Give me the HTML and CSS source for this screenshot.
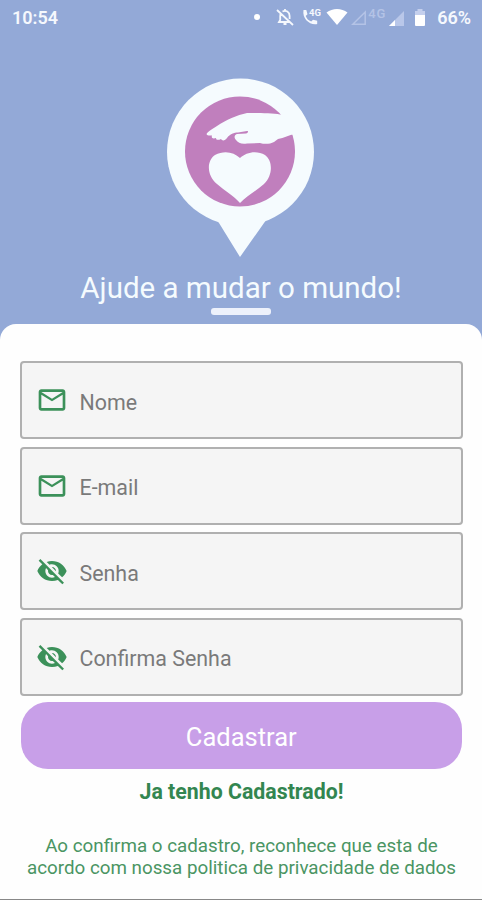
FILE: index.html
```html
<!DOCTYPE html>
<html lang="pt-BR">
<head>
  <meta charset="UTF-8" />
  <meta name="viewport" content="width=device-width, initial-scale=1" />
  <title>Cadastro</title>
  <link rel="stylesheet" href="styles.css">
</head>
<body>

<div class="status-bar">
  <span class="time">10:54</span>
  <span class="dot"></span>
  <svg class="bell" viewBox="0 0 18 18" fill="none" stroke="#f5f8fd" stroke-width="1.8">
    <path d="M5 4.8C4.2 6 4.2 7 4.2 8.500V12L3 14H13M6.500 3.500C10 1.700 13.600 4 13.600 8V11M1 2L17 17" />
    <path d="M9 1V3M7.500 16H10.500" />
  </svg>
  <svg class="phone" viewBox="0 0 19 18">
    <path fill="#f5f8fd" d="M1.500 2H4.300L5.500 6.200L3.700 8C4.700 10.700 6.500 12.500 9.200 13.500L11 11.700L15.200 12.800V16C8 17.500 0 11 1.500 2Z" />
    <text x="7" y="8" class="label-small">4G</text>
  </svg>
  <svg class="wifi" viewBox="0 0 22 18">
    <path fill="#fff" d="M0.500 4.500C6.500 -0.300 15.500 -0.300 21.500 4.500L11 17Z" />
  </svg>
  <svg class="signal-empty" viewBox="0 0 16 16">
    <path fill="none" stroke="#b4c3e6" stroke-width="1.500" d="M1.800 14.200H14.200V2Z" />
  </svg>
  <span class="network">4G</span>
  <svg class="signal" viewBox="0 0 16 16">
    <path fill="#b9c7e9" d="M0 16H15V1Z" />
    <path fill="#fff" d="M0 16H6V10Z" />
  </svg>
  <svg class="battery" viewBox="0 0 10 17">
    <path fill="#c4cfed" d="M0 2H2.500V0H7.500V2H10V8H0Z" />
    <path fill="#fff" d="M0 6H10V16Q10 17 9 17H1Q0 17 0 16Z" />
  </svg>
  <span class="percent">66%</span>
</div>

<header>
  <svg class="logo" viewBox="0 0 148 180">
    <path fill="#f5fbfe" d="M47 138L52 145L73 179L97 145L102 138Z" />
    <circle fill="#f5fbfe" cx="73.500" cy="74" r="73.500" />
    <circle fill="#c07fbd" cx="73" cy="73.500" r="55" />
    <path fill="#f5fbfe" d="M113 36.500C105 35 88 35 80 35C70 37 59 42 50 48C46 51 41 53 39.500 56C40 58 43 57.500 45 57.500C44 60 46 61 49 60C49 62 51 62.500 54 61C55 63 58 63 60 60C63 56 67 54.500 71 54.500L80 53C82 52.500 81 55 79 55.500L70 56C67 57 67 60 69 62C71 65 75 66.500 80 65.500L93 65C98 66.500 103 66 107 64L111 61C117 60 122 57 128 56V36Z" />
    <path fill="#f5fbfe" d="M73 125C67 118 58 113 50 106C39 97 40 82 48 77C57 72 67 74 73 80C79 74 90 72 98 77C106 83 106 97 97 106C89 113 80 118 73 125Z" />
  </svg>
  <h1>Ajude a mudar o mundo!</h1>
  <div class="underline"></div>
</header>

<main class="card">
  <form>
    <label class="field">
      <svg viewBox="0 0 24 24"><path d="M22 6c0-1.100-.9-2-2-2H4c-1.100 0-2 .9-2 2v12c0 1.100.9 2 2 2h16c1.100 0 2-.9 2-2V6zm-2 0-8 5-8-5h16zm0 12H4V8l8 5 8-5v10z" /></svg>
      <input type="text" placeholder="Nome" />
    </label>
    <label class="field">
      <svg viewBox="0 0 24 24"><path d="M22 6c0-1.100-.9-2-2-2H4c-1.100 0-2 .9-2 2v12c0 1.100.9 2 2 2h16c1.100 0 2-.9 2-2V6zm-2 0-8 5-8-5h16zm0 12H4V8l8 5 8-5v10z" /></svg>
      <input type="email" placeholder="E-mail" />
    </label>
    <label class="field">
      <svg viewBox="0 0 24 24"><path d="M12 7c2.760 0 5 2.240 5 5 0 .65-.13 1.260-.36 1.830l2.920 2.920c1.510-1.260 2.700-2.890 3.430-4.750-1.730-4.390-6-7.500-11-7.500-1.400 0-2.740.25-3.980.7l2.160 2.160C10.740 7.130 11.350 7 12 7zM2 4.270l2.280 2.280.46.46C3.080 8.300 1.780 10.020 1 12c1.730 4.390 6 7.500 11 7.500 1.550 0 3.030-.3 4.380-.84l.42.42L19.730 22 21 20.730 3.270 3 2 4.270zM7.530 9.800l1.550 1.550c-.05.21-.08.43-.08.65 0 1.660 1.340 3 3 3 .22 0 .44-.03.65-.08l1.550 1.550c-.67.33-1.410.53-2.200.53-2.760 0-5-2.240-5-5 0-.79.2-1.530.53-2.200zm4.310-.78 3.150 3.150.02-.16c0-1.660-1.340-3-3-3l-.17.01z" /></svg>
      <input type="password" placeholder="Senha" />
    </label>
    <label class="field">
      <svg viewBox="0 0 24 24"><path d="M12 7c2.760 0 5 2.240 5 5 0 .65-.13 1.260-.36 1.830l2.920 2.920c1.510-1.260 2.700-2.890 3.430-4.750-1.730-4.390-6-7.500-11-7.500-1.400 0-2.740.25-3.980.7l2.160 2.160C10.740 7.130 11.350 7 12 7zM2 4.270l2.280 2.280.46.46C3.080 8.300 1.780 10.020 1 12c1.730 4.390 6 7.500 11 7.500 1.550 0 3.030-.3 4.380-.84l.42.42L19.730 22 21 20.730 3.270 3 2 4.270zM7.530 9.800l1.550 1.550c-.05.21-.08.43-.08.65 0 1.660 1.340 3 3 3 .22 0 .44-.03.65-.08l1.550 1.550c-.67.33-1.410.53-2.200.53-2.760 0-5-2.240-5-5 0-.79.2-1.530.53-2.200zm4.310-.78 3.150 3.150.02-.16c0-1.660-1.340-3-3-3l-.17.01z" /></svg>
      <input type="password" placeholder="Confirma Senha" />
    </label>
    <button type="button">Cadastrar</button>
  </form>
  <a class="login-link">Ja tenho Cadastrado!</a>
  <p class="terms">Ao confirma o cadastro, reconhece que esta de<br>acordo com nossa politica de privacidade de dados</p>
</main>

</body>
</html>
```
FILE: styles.css
```css
* {
  box-sizing: border-box;
}
body {
  font-family: Roboto, sans-serif;
  background: #93a9d7;
  margin: 0;
  height: 900px;
  display: flex;
  flex-direction: column;
  overflow: hidden;
}
svg {
  display: block;
  flex: none;
}

/* Status bar */
.status-bar {
  display: flex;
  align-items: center;
  height: 35px;
  padding: 0 11px 0 12px;
  color: #f5f8fd;
  font-size: 18px;
  font-weight: 600;
}
.dot {
  width: 6px;
  height: 6px;
  border-radius: 50%;
  background: #fff;
  margin-left: auto;
  margin-bottom: 2px;
}
.bell {
  width: 18px;
  height: 18px;
  margin-left: 16px;
  margin-bottom: 1px;
}
.phone {
  width: 19px;
  height: 18px;
  margin-left: 8px;
  margin-bottom: 1px;
}
.label-small {
  font-size: 9.5px;
  font-weight: 700;
  fill: #f5f8fd;
}
.wifi {
  width: 22px;
  height: 18px;
  margin-left: 5px;
  margin-bottom: 2px;
}
.signal-empty {
  width: 16px;
  height: 16px;
  margin-left: 3px;
}
.network {
  width: 19px;
  margin-left: 1px;
  font-size: 13px;
  letter-spacing: 1px;
  font-weight: 500;
  color: #b4c3e6;
  padding-bottom: 8px;
}
.signal {
  width: 16px;
  height: 16px;
  margin-left: 2px;
}
.battery {
  width: 10px;
  height: 17px;
  margin-left: 10px;
}
.percent {
  margin-left: 12px;
}

/* Logo and title */
header {
  display: flex;
  flex-direction: column;
  align-items: center;
  height: 289px;
  padding-top: 43px;
}
.logo {
  width: 148px;
  height: 180px;
}
h1 {
  margin: 12px 0 0;
  font-size: 29.5px;
  line-height: 36px;
  font-weight: 400;
  color: #f5fbfe;
  white-space: nowrap;
}
.underline {
  width: 60px;
  height: 7px;
  margin-top: 2px;
  border-radius: 3px;
  background: #edf1fb;
}

/* Form */
.card {
  flex: 1;
  display: flex;
  flex-direction: column;
  align-items: center;
  background: #fefefe;
  border-radius: 16px 16px 0 0;
  border-bottom: 1px solid #888;
  padding: 37px 19px 0 20px;
}
form {
  display: flex;
  flex-direction: column;
  gap: 7.5px;
  width: 100%;
}
.field {
  display: flex;
  align-items: center;
  height: 78px;
  padding-left: 14px;
  background: #f5f5f5;
  border: 2px solid #b0b0b0;
  border-radius: 4px;
}
.field svg {
  width: 32px;
  height: 32px;
  fill: #3c915a;
}
input {
  flex: 1;
  min-width: 0;
  margin-left: 11.5px;
  padding: 4px 0 0;
  border: none;
  outline: none;
  background: none;
  font-family: inherit;
  font-size: 21.4px;
}
input::placeholder {
  color: #7a7a7a;
}
button {
  height: 66.5px;
  margin: -1px 1px 0 0.5px;
  border: none;
  border-radius: 27px;
  background: #c89fe8;
  color: #fff;
  font-family: inherit;
  font-size: 25.5px;
  padding: 3px 0 0;
}
.login-link {
  margin-top: 10px;
  font-size: 21.3px;
  line-height: 26px;
  font-weight: 700;
  color: #338650;
}
.terms {
  margin: 30px 0 0;
  font-size: 18.8px;
  line-height: 22px;
  text-align: center;
  white-space: nowrap;
  color: #4a9563;
}
```
